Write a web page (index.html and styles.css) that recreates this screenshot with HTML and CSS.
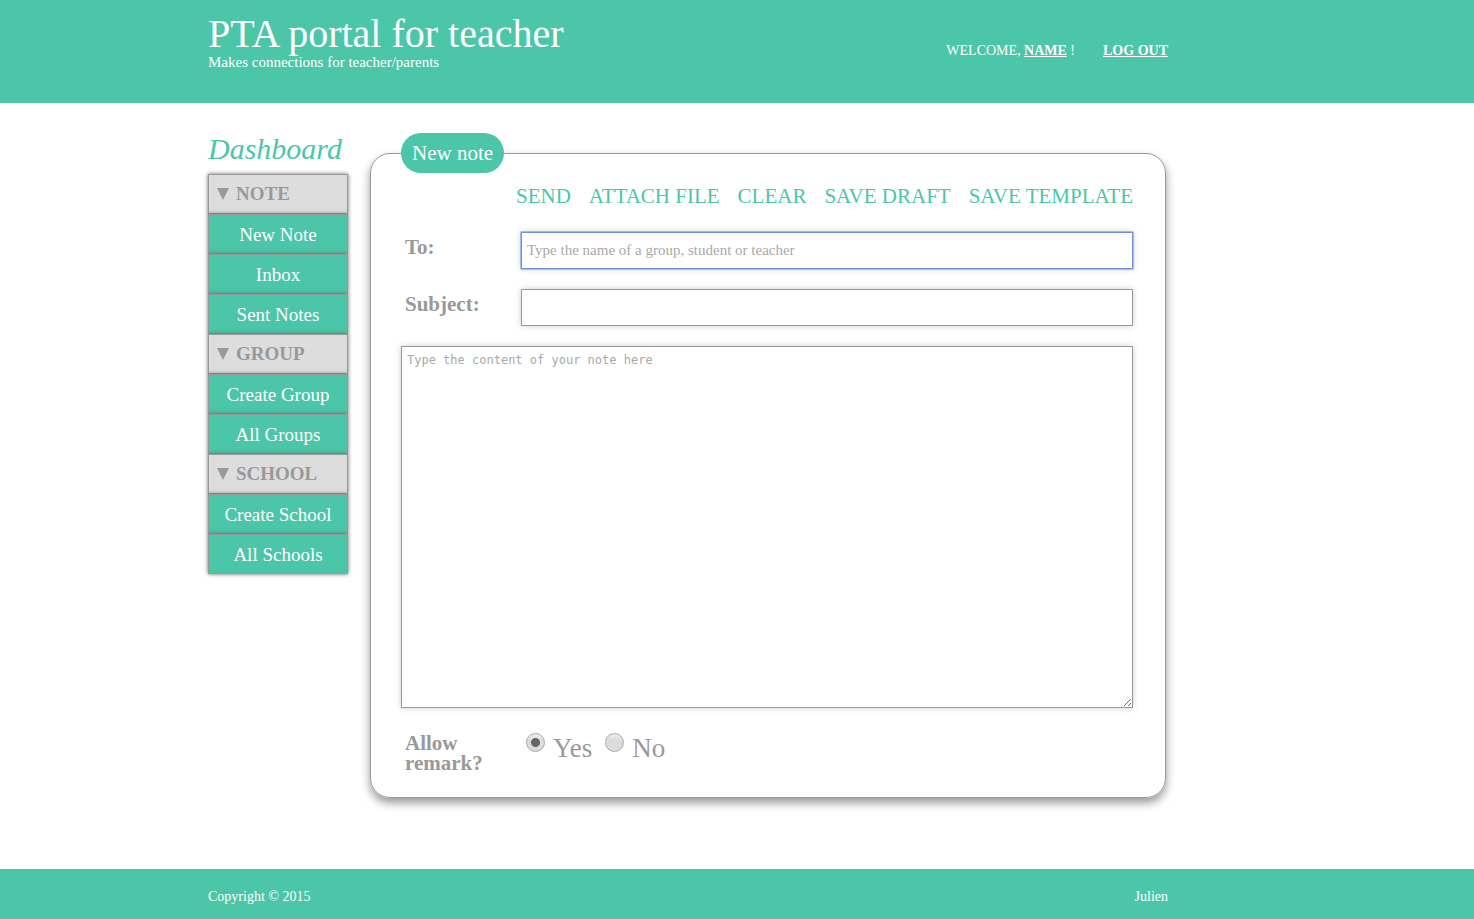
FILE: index.html
```html
<!DOCTYPE html>
<html lang="en">
<head>
<meta charset="utf-8">
<title>PTA portal for teacher</title>
<link rel="stylesheet" href="styles.css">
</head>
<body>
<header class="header">
  <div class="wrap header-row">
    <div>
      <h1 class="title">PTA portal for teacher</h1>
      <p class="tagline">Makes connections for teacher/parents</p>
    </div>
    <div class="account">
      <span>WELCOME, <a href="#">NAME</a> !</span>
      <a href="#">LOG OUT</a>
    </div>
  </div>
</header>

<div class="wrap main">
  <nav class="sidebar" aria-labelledby="dash">
    <h2 class="dash-title" id="dash">Dashboard</h2>
    <div class="menu">
      <h3 class="menu-head"><span class="arrow"></span>NOTE</h3>
      <a class="menu-item" href="#">New Note</a>
      <a class="menu-item" href="#">Inbox</a>
      <a class="menu-item" href="#">Sent Notes</a>
      <h3 class="menu-head"><span class="arrow"></span>GROUP</h3>
      <a class="menu-item" href="#">Create Group</a>
      <a class="menu-item" href="#">All Groups</a>
      <h3 class="menu-head"><span class="arrow"></span>SCHOOL</h3>
      <a class="menu-item" href="#">Create School</a>
      <a class="menu-item" href="#">All Schools</a>
    </div>
  </nav>

  <form class="card">
    <h2 class="badge">New note</h2>
    <div class="actions">
      <button type="button">SEND</button>
      <button type="button">ATTACH FILE</button>
      <button type="button">CLEAR</button>
      <button type="button">SAVE DRAFT</button>
      <button type="button">SAVE TEMPLATE</button>
    </div>
    <div class="row">
      <label class="label" for="to">To:</label>
      <input class="field field-active" id="to" type="text" placeholder="Type the name of a group, student or teacher">
    </div>
    <div class="row">
      <label class="label" for="subject">Subject:</label>
      <input class="field" id="subject" type="text">
    </div>
    <textarea class="content" aria-label="Note content" placeholder="Type the content of your note here"></textarea>
    <div class="row" role="radiogroup" aria-labelledby="remark">
      <span class="label" id="remark">Allow remark?</span>
      <div class="choices">
        <input type="radio" name="remark" id="yes" checked><label for="yes">Yes</label>
        <input type="radio" name="remark" id="no"><label for="no">No</label>
      </div>
    </div>
  </form>
</div>

<footer class="footer">
  <div class="wrap footer-row"><span>Copyright © 2015</span><span>Julien</span></div>
</footer>
</body>
</html>
```

FILE: styles.css
```css
* { box-sizing: border-box; }

body {
  margin: 0;
  min-height: 100vh;
  display: flex;
  flex-direction: column;
  background: #fff;
  color: #999;
  font-family: "Liberation Serif", serif;
  font-size: 14px;
}

h1, h2, h3, p { margin: 0; font-weight: normal; }

.wrap {
  width: calc(100% - 208px);
  max-width: 960px;
  margin-left: 208px;
}

.header { background: #4bc6a8; color: #fff; padding: 14px 0 33px; }
.header-row { display: flex; justify-content: space-between; align-items: center; }
.title { font-size: 40px; line-height: 40px; }
.tagline { font-size: 15px; line-height: 16px; }
.account { display: flex; gap: 28px; padding-top: 18px; }
.account a { color: #fff; font-weight: bold; }

.main { flex: 1; display: flex; align-items: flex-start; gap: 22px; padding: 30px 2px 70px 0; }

.sidebar { flex: none; width: 140px; }
.dash-title { color: #4bc6a8; font-size: 30px; font-style: italic; line-height: 32px; margin-bottom: 9px; }
.menu-head, .menu-item {
  display: flex;
  align-items: center;
  height: 40px;
  border: 1px solid #999;
  box-shadow: 0 0 4px #666;
}
.menu-head { background: #ddd; font-size: 19px; font-weight: bold; padding-left: 8px; gap: 7px; }
.menu-item { background: #4bc6a8; color: #fff; font-size: 19px; justify-content: center; padding-top: 2px; text-decoration: none; }
.arrow { border: 6px solid transparent; border-top: 12px solid #999; border-bottom: 0; }

.card {
  position: relative;
  flex: 1;
  margin-top: 20px;
  padding: 30px 32px 24px 30px;
  border: 1px solid #999;
  border-radius: 20px;
  box-shadow: 0 5px 10px #999;
  display: flex;
  flex-direction: column;
  gap: 20px;
}
.badge {
  position: absolute;
  top: -21px;
  left: 30px;
  padding: 0 11px;
  border-radius: 20px;
  background: #4bc6a8;
  color: #fff;
  font-size: 21px;
  line-height: 40px;
}
.actions { display: flex; justify-content: flex-end; gap: 18px; margin-bottom: 4px; }
.actions button { padding: 0; border: 0; background: none; color: #4bc6a8; font: 21px/24px "Liberation Serif", serif; }
.row { display: flex; align-items: flex-start; }
.label { flex: none; width: 120px; padding: 5px 30px 0 4px; font-size: 21px; font-weight: bold; line-height: 20px; }
.field {
  flex: 1;
  min-width: 0;
  height: 37px;
  padding: 0 5px;
  border: 1px solid #999;
  box-shadow: 0 0 6px #ccc;
  font: 15px "Liberation Serif", serif;
}
.field-active { border-color: #6a92d4; border-radius: 1px; box-shadow: 0 0 0 1px #9dbdf2, 0 0 6px #ccc; }
.content {
  width: 100%;
  height: 362px;
  padding: 5px;
  border: 1px solid #999;
  box-shadow: 0 0 6px #ccc;
  font: 12px/16px "DejaVu Sans Mono", monospace;
  resize: vertical;
}
.field::placeholder, .content::placeholder { color: #a9a9a9; opacity: 1; }
.choices { display: flex; padding: 4px 0 0 5px; font-size: 27px; line-height: 32px; }
.choices label { margin: 0 13px 0 8px; }
.choices input {
  appearance: none;
  width: 19px;
  height: 19px;
  margin: 1px 0 0;
  border: 1px solid #aaa;
  border-radius: 50%;
  background: linear-gradient(#eee, #dcdcdc 40%);
}
.choices input:checked { background: radial-gradient(circle, #666 4px, transparent 5px), linear-gradient(#eee, #dcdcdc 40%); }

.footer { background: #4bc6a8; color: #fff; }
.footer-row { display: flex; justify-content: space-between; line-height: 16px; padding: 20px 0 14px; }
```
